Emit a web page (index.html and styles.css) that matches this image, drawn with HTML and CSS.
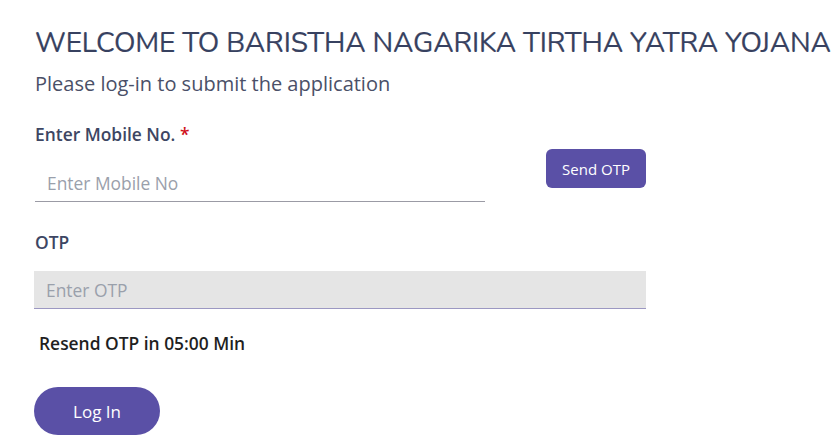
FILE: index.html
```html
<!DOCTYPE html>
<html>
<head>
<meta charset="utf-8">
<link rel="stylesheet" href="styles.css">
</head>
<body>
<main class="page">
  <h1 class="title">WELCOME TO BARISTHA NAGARIKA TIRTHA YATRA YOJANA</h1>
  <p class="subtitle">Please log-in to submit the application</p>
  <form class="form">
    <label class="label">Enter Mobile No. <span class="req">*</span></label>
    <div class="mobile-row">
      <input class="field mobile" type="text" placeholder="Enter Mobile No">
      <button type="button" class="send-btn">Send OTP</button>
    </div>
    <label class="label otp-label">OTP</label>
    <input class="field otp" type="text" placeholder="Enter OTP" disabled>
    <p class="resend">Resend OTP in 05:00 Min</p>
    <button type="button" class="login-btn">Log In</button>
  </form>
</main>
</body>
</html>
```
FILE: styles.css
```css
html, body {
  margin: 0;
  padding: 0;
  background: #ffffff;
}
body {
  font-family: "Open Sans", "Liberation Sans", sans-serif;
  color: #3d4663;
}
.page {
  padding: 25px 0 0 35px;
}
.title {
  font-family: "Nunito", "Lato", sans-serif;
  font-weight: 400;
  font-size: 28px;
  line-height: 36px;
  margin: 0;
  color: #374160;
  white-space: nowrap;
  letter-spacing: -0.15px;
  -webkit-text-stroke: 0.2px #374160;
}
.subtitle {
  font-size: 20px;
  line-height: 28px;
  margin: 9px 0 0 0;
  color: #4a5068;
}
.form {
  width: 612px;
  display: flex;
  flex-direction: column;
  align-items: flex-start;
  margin-top: 24px;
}
.label {
  font-size: 17.4px;
  font-weight: 600;
  line-height: 24px;
  color: #3d4663;
}
.req {
  color: #d0121c;
}
.mobile-row {
  width: 611px;
  display: flex;
  justify-content: space-between;
  align-items: flex-start;
  margin-top: 3px;
}
.field {
  font-family: "Open Sans", "Liberation Sans", sans-serif;
  font-size: 17.4px;
  box-sizing: border-box;
  height: 38px;
  border: none;
  border-bottom: 1px solid #9b9ba5;
  padding: 0 12px;
  outline: none;
  color: #333;
  background: #fff;
}
.field::placeholder {
  color: #9aa0ab;
}
.mobile {
  width: 450px;
  margin-top: 15px;
}
.send-btn {
  margin-top: 0;
  width: 100px;
  height: 39px;
  border: none;
  border-radius: 6px;
  background: #5a50a6;
  color: #ffffff;
  font-family: "Open Sans", "Liberation Sans", sans-serif;
  font-size: 15px;
  padding: 0;
}
.otp-label {
  margin-top: 28px;
}
.otp {
  width: 612px;
  margin-top: 17px;
  margin-left: -1px;
  background: #e5e5e5;
  border-bottom: 1px solid #9c98c2;
}
.resend {
  margin: 22px 0 0 4px;
  font-size: 17.4px;
  font-weight: 600;
  line-height: 24px;
  color: #1f1f1f;
}
.login-btn {
  margin-top: 32px;
  margin-left: -1px;
  width: 126px;
  height: 48px;
  border: none;
  border-radius: 24px;
  background: #5a50a6;
  color: #ffffff;
  font-family: "Open Sans", "Liberation Sans", sans-serif;
  font-size: 17px;
  padding: 0;
}
```
